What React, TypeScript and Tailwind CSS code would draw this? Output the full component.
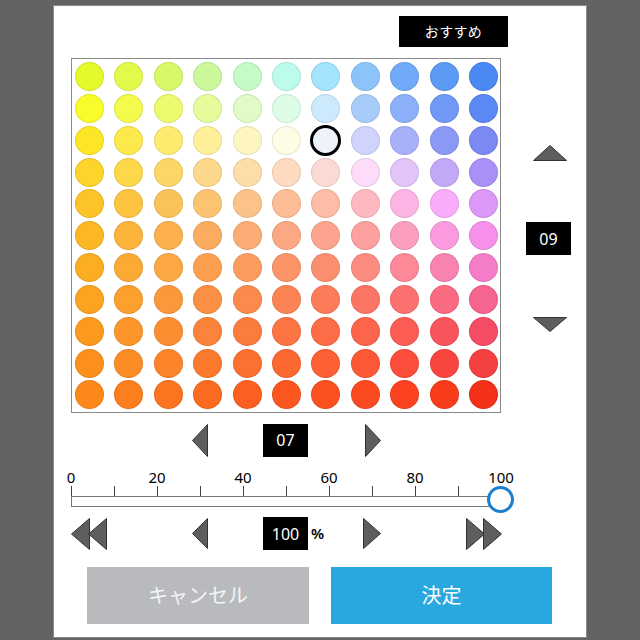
import React from 'react';

// 11 x 11 palette, read row by row from the top of the picker
const PALETTE: string[][] = [
  ['#e6f92b', '#e2fb4a', '#d8f86a', '#cbf99a', '#c4fbc6', '#bdfbec', '#a4e4fc', '#8cc4fa', '#70aaf8', '#5b9bf6', '#4a88f2'],
  ['#f8fc28', '#f3fb4c', '#ecfa70', '#e6fb9c', '#e0fbc6', '#dcfce6', '#cceafc', '#a8ccfa', '#8cb0fa', '#7098f6', '#5c88f4'],
  ['#fce626', '#fde94c', '#fdeb70', '#fdf098', '#fdf6c0', '#fdfce4', '#eef2fb', '#d0d4fc', '#a8b0fa', '#8c98f6', '#7c88f4'],
  ['#fcd42a', '#fdd848', '#fcd666', '#fdd88c', '#fdddaa', '#fedac0', '#fcdad4', '#fcdcf8', '#e2c4f8', '#c4a8f8', '#a890f6'],
  ['#fcc428', '#fcc440', '#fcc25a', '#fcc472', '#fcc388', '#fdbd96', '#fcbca6', '#fcbac0', '#fcb4e4', '#f8acfa', '#dc98f6'],
  ['#fcb824', '#fcb43a', '#fcb04e', '#fcac60', '#fcac74', '#fca884', '#fca48e', '#fca0a0', '#fc9ec0', '#fc9ae0', '#f690ea'],
  ['#fcae22', '#fcaa34', '#fca844', '#fca050', '#fc9c5e', '#fc9468', '#fc8e70', '#fc8c80', '#fc8898', '#f882b0', '#f47cc8'],
  ['#fca420', '#fca02e', '#fc983c', '#fc9044', '#fc8a4e', '#fc8454', '#fc7c5a', '#fc7464', '#fc7070', '#fa6a80', '#f66490'],
  ['#fc9a1e', '#fc962a', '#fc8e32', '#fc843a', '#fc7c3e', '#fc7442', '#fc6c46', '#fc644c', '#fc5c54', '#f8545c', '#f44c64'],
  ['#fc901c', '#fc8c24', '#fc842a', '#fc7a2e', '#fc7030', '#fc6832', '#fc6034', '#fc5836', '#fc4e3a', '#f8463e', '#f44040'],
  ['#fc881a', '#fc7e1c', '#fc7420', '#fc6a20', '#fc6020', '#fc5620', '#fc5020', '#fc4a20', '#fc4220', '#f83c1c', '#f43018'],
];

const SELECTED = { row: 2, col: 6 };

const FONT = "font-['Noto_Sans','Noto_Sans_CJK_JP',sans-serif]";

function Triangle({ dir, w, h }: { dir: 'up' | 'down' | 'left' | 'right'; w: number; h: number }) {
  const pts = {
    up: `0.5,${h - 0.5} ${w / 2},0.5 ${w - 0.5},${h - 0.5}`,
    down: `0.5,0.5 ${w - 0.5},0.5 ${w / 2},${h - 0.5}`,
    left: `${w - 0.5},0.5 ${w - 0.5},${h - 0.5} 0.5,${h / 2}`,
    right: `0.5,0.5 0.5,${h - 0.5} ${w - 0.5},${h / 2}`,
  }[dir];
  return (
    <svg width={w} height={h} viewBox={`0 0 ${w} ${h}`} className="block">
      <polygon points={pts} fill="#5e5e5e" stroke="#333" strokeWidth={1} strokeLinejoin="miter" />
    </svg>
  );
}

function DoubleTriangle({ dir }: { dir: 'left' | 'right' }) {
  const w = 36;
  const h = 32;
  const a = dir === 'left'
    ? ['18.5,0.5 18.5,31.5 0.5,16', '35.5,0.5 35.5,31.5 17.5,16']
    : ['0.5,0.5 0.5,31.5 18.5,16', '17.5,0.5 17.5,31.5 35.5,16'];
  return (
    <svg width={w} height={h} viewBox={`0 0 ${w} ${h}`} className="block">
      {a.map((p) => (
        <polygon key={p} points={p} fill="#5e5e5e" stroke="#333" strokeWidth={1} />
      ))}
    </svg>
  );
}

function NumBox({ value }: { value: string }) {
  return (
    <div className="w-[45px] h-[33px] bg-black text-white flex items-center justify-center text-[16px] leading-none">
      {value}
    </div>
  );
}

export default function App() {
  const labels = ['0', '20', '40', '60', '80', '100'];

  return (
    <div className={`w-[640px] h-[640px] bg-[#636363] pt-[5px] pl-[53px] ${FONT}`}>
      <div className="w-[534px] h-[633px] bg-white border border-[#8a8a8a] flex flex-col">
        {/* recommend tag */}
        <div className="h-[41px] pt-[10px] pl-[345px]">
          <div className="w-[109px] h-[31px] bg-black text-white text-[14px] flex items-center justify-center tracking-wide">
            おすすめ
          </div>
        </div>

        {/* palette + vertical control */}
        <div className="mt-[11px] pl-[17px] flex">
          <div className="w-[430px] h-[355px] shrink-0 border border-[#8a8a8a] pl-[3px] pt-[3px]">
            <div className="grid grid-cols-[repeat(11,29px)] gap-x-[10.4px] gap-y-[2.85px]">
              {PALETTE.map((row, r) =>
                row.map((c, ci) =>
                  r === SELECTED.row && ci === SELECTED.col ? (
                    <div
                      key={`${r}-${ci}`}
                      className="w-[31px] h-[31px] -m-px rounded-full border-[3px] border-black"
                      style={{ backgroundColor: c }}
                    />
                  ) : (
                    <div
                      key={`${r}-${ci}`}
                      className="w-[29px] h-[29px] rounded-full shadow-[inset_0_0_0_1px_rgba(0,0,0,0.09)]"
                      style={{ backgroundColor: c }}
                    />
                  )
                )
              )}
            </div>
          </div>

          <div className="w-[80px] shrink-0 flex flex-col items-start">
            <div className="mt-[87px] ml-[32px]">
              <Triangle dir="up" w={34} h={16} />
            </div>
            <div className="mt-[61px] ml-[25px]">
              <NumBox value="09" />
            </div>
            <div className="mt-[62px] ml-[32px]">
              <Triangle dir="down" w={34} h={15} />
            </div>
          </div>
        </div>

        {/* horizontal control */}
        <div className="mt-[10px] flex items-center h-[34px]">
          <div className="ml-[138px]">
            <Triangle dir="left" w={16} h={33} />
          </div>
          <div className="ml-[55px]">
            <NumBox value="07" />
          </div>
          <div className="ml-[57px]">
            <Triangle dir="right" w={16} h={33} />
          </div>
        </div>

        {/* scale labels */}
        <div className="mt-[12px] ml-[17px] flex gap-[86px] h-[16px]">
          {labels.map((l) => (
            <div key={l} className="w-0 flex justify-center">
              <span className="text-[15px] leading-[16px] text-black whitespace-nowrap">{l}</span>
            </div>
          ))}
        </div>

        {/* ticks + track */}
        <div className="mt-[1px] ml-[17px] relative w-[430px]">
          <div className="flex gap-[42px] h-[10px]">
            {Array.from({ length: 10 }).map((_, i) => (
              <div key={i} className="w-px h-full bg-[#444]" />
            ))}
          </div>
          <div className="w-[430px] h-[11px] border border-[#777] bg-white" />
          <div className="absolute left-[416px] top-[0px] w-[27px] h-[27px] rounded-full border-[3.5px] border-[#1b80cf] bg-white" />
        </div>

        {/* percent control */}
        <div className="mt-[10px] flex items-center h-[33px]">
          <div className="ml-[17px]">
            <DoubleTriangle dir="left" />
          </div>
          <div className="ml-[85px]">
            <Triangle dir="left" w={16} h={31} />
          </div>
          <div className="ml-[55px]">
            <NumBox value="100" />
          </div>
          <span className="ml-[3px] text-[15px] font-semibold text-black">%</span>
          <div className="ml-[39px]">
            <Triangle dir="right" w={18} h={31} />
          </div>
          <div className="ml-[85px]">
            <DoubleTriangle dir="right" />
          </div>
        </div>

        {/* buttons */}
        <div className="mt-[17px] ml-[33px] flex gap-[22px]">
          <button className="w-[222px] h-[57px] bg-[#b9babe] text-[#f4f4f4] text-[20px] flex items-center justify-center">
            キャンセル
          </button>
          <button className="w-[221px] h-[57px] bg-[#29a8e0] text-white text-[20px] flex items-center justify-center">
            決定
          </button>
        </div>
      </div>
    </div>
  );
}
